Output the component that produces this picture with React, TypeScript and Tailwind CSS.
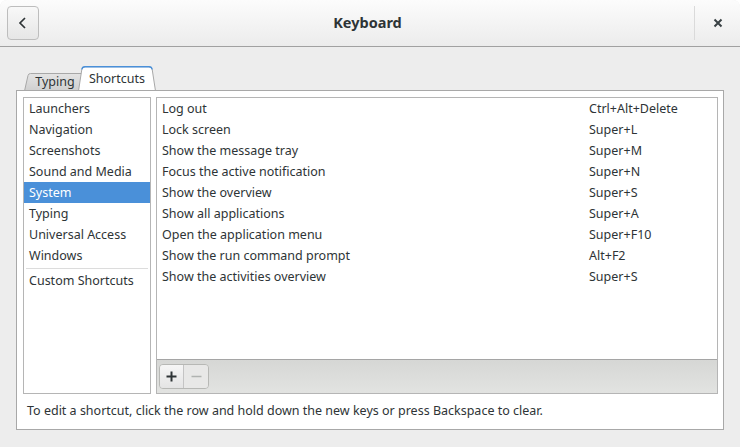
import React from 'react';

const sections = [
  'Launchers',
  'Navigation',
  'Screenshots',
  'Sound and Media',
  'System',
  'Typing',
  'Universal Access',
  'Windows',
];

const shortcuts: [string, string][] = [
  ['Log out', 'Ctrl+Alt+Delete'],
  ['Lock screen', 'Super+L'],
  ['Show the message tray', 'Super+M'],
  ['Focus the active notification', 'Super+N'],
  ['Show the overview', 'Super+S'],
  ['Show all applications', 'Super+A'],
  ['Open the application menu', 'Super+F10'],
  ['Show the run command prompt', 'Alt+F2'],
  ['Show the activities overview', 'Super+S'],
];

export default function App() {
  return (
    <div
      className="w-[740px] h-[447px] bg-white text-[12.5px] text-[#2e3436] overflow-hidden"
      style={{ fontFamily: '"Noto Sans", "Open Sans", sans-serif' }}
    >
      <div className="h-full flex flex-col rounded-t-[7px] overflow-hidden bg-[#ededed]">
        {/* header bar */}
        <div className="h-[47px] shrink-0 flex items-center border-b border-[#a1a1a1] bg-gradient-to-b from-[#fcfcfc] to-[#ececec]">
          <button className="ml-[7px] w-[32px] h-[34px] flex items-center justify-center rounded-[4px] border border-[#bdbdbd] bg-gradient-to-b from-[#f8f8f8] to-[#e6e6e6]">
            <svg width="14" height="14" viewBox="0 0 14 14">
              <path d="M9 2 4 7l5 5" fill="none" stroke="#2e3436" strokeWidth="1.7" />
            </svg>
          </button>
          <div className="flex-1 text-center font-bold text-[14.5px] text-[#2e3436] pl-[2px]">Keyboard</div>
          <div className="w-px h-[34px] bg-[#dadada]" />
          <div className="w-[45px] flex items-center justify-center">
            <svg width="10" height="10" viewBox="0 0 10 10">
              <path d="M1.5 1.5 8.5 8.5M8.5 1.5 1.5 8.5" stroke="#3a4245" strokeWidth="2" />
            </svg>
          </div>
        </div>

        {/* tabs */}
        <div className="h-[44px] shrink-0 flex items-end pl-[24px]">
          <div className="relative w-[58px] h-[18px] flex items-center justify-center">
            <svg className="absolute inset-0" width="58" height="18" viewBox="0 0 58 18">
              <defs>
                <linearGradient id="tg" x1="0" y1="0" x2="0" y2="1">
                  <stop offset="0" stopColor="#e4e4e4" />
                  <stop offset="1" stopColor="#cfcfcf" />
                </linearGradient>
              </defs>
              <path d="M0.5 18 L4 2.5 Q4.5 0.5 6.5 0.5 L58 0.5 L58 18 Z" fill="url(#tg)" stroke="#a8a8a8" />
            </svg>
            <span className="relative pl-[4px] text-[#2e3436]">Typing</span>
          </div>
          <div className="relative -ml-[4px] w-[78px] h-[25px] flex items-center justify-center">
            <svg className="absolute inset-0" width="78" height="25" viewBox="0 0 78 25">
              <path d="M0.5 25 L3.8 3.5 Q4.3 0.7 7 0.7 L71 0.7 Q73.7 0.7 74.2 3.5 L77.5 25" fill="#ffffff" stroke="#a8a8a8" />
              <path d="M3.8 3.5 Q4.3 0.7 7 0.7 L71 0.7 Q73.7 0.7 74.2 3.5" fill="none" stroke="#4a90d9" strokeWidth="1.4" />
            </svg>
            <span className="relative pt-[1px]">Shortcuts</span>
          </div>
        </div>

        {/* notebook page */}
        <div className="ml-[16px] w-[708px] h-[340px] border border-[#a8a8a8] bg-white flex flex-col -mt-px relative">
          <div className="flex gap-[5px] pt-[6px] pl-[6px] pr-[5px] h-[303px]">
            {/* sections */}
            <div className="w-[128px] border border-[#b5b5b5] bg-white">
              {sections.map(s => (
                <div
                  key={s}
                  className={`h-[21px] leading-[21px] pl-[5px] ${s === 'System' ? 'bg-[#4a90d9] text-white' : ''}`}
                >
                  {s}
                </div>
              ))}
              <div className="mx-[2px] mt-[2px] mb-[1px] h-px bg-[#dcdcdc]" />
              <div className="h-[21px] leading-[21px] pl-[5px]">Custom Shortcuts</div>
            </div>

            {/* shortcuts */}
            <div className="flex-1 border border-[#b5b5b5] flex flex-col">
              <div className="flex-1 bg-white">
                {shortcuts.map(([name, key], i) => (
                  <div key={i} className="h-[21px] leading-[21px] flex pl-[5px]">
                    <span className="w-[427px]">{name}</span>
                    <span>{key}</span>
                  </div>
                ))}
              </div>
              <div className="h-[34px] border-t border-[#a5a5a5] bg-gradient-to-b from-[#d6d7d5] to-[#e2e3e1] flex items-center pl-[2px]">
                <div className="flex h-[25px] rounded-[4px] border border-[#b7b8b5] overflow-hidden">
                  <div className="w-[24px] flex items-center justify-center bg-gradient-to-b from-[#f6f6f6] to-[#e4e4e4] border-r border-[#c4c4c4]">
                    <svg width="11" height="11" viewBox="0 0 11 11">
                      <path d="M5.5 0.5v10M0.5 5.5h10" stroke="#2e3436" strokeWidth="2" />
                    </svg>
                  </div>
                  <div className="w-[24px] flex items-center justify-center bg-[#e8e8e7]">
                    <svg width="11" height="11" viewBox="0 0 11 11">
                      <path d="M0.5 5.5h10" stroke="#b0b3b1" strokeWidth="1.5" />
                    </svg>
                  </div>
                </div>
              </div>
            </div>
          </div>
          <div className="flex-1 flex items-center pl-[10px]">
            To edit a shortcut, click the row and hold down the new keys or press Backspace to clear.
          </div>
        </div>
      </div>
    </div>
  );
}
